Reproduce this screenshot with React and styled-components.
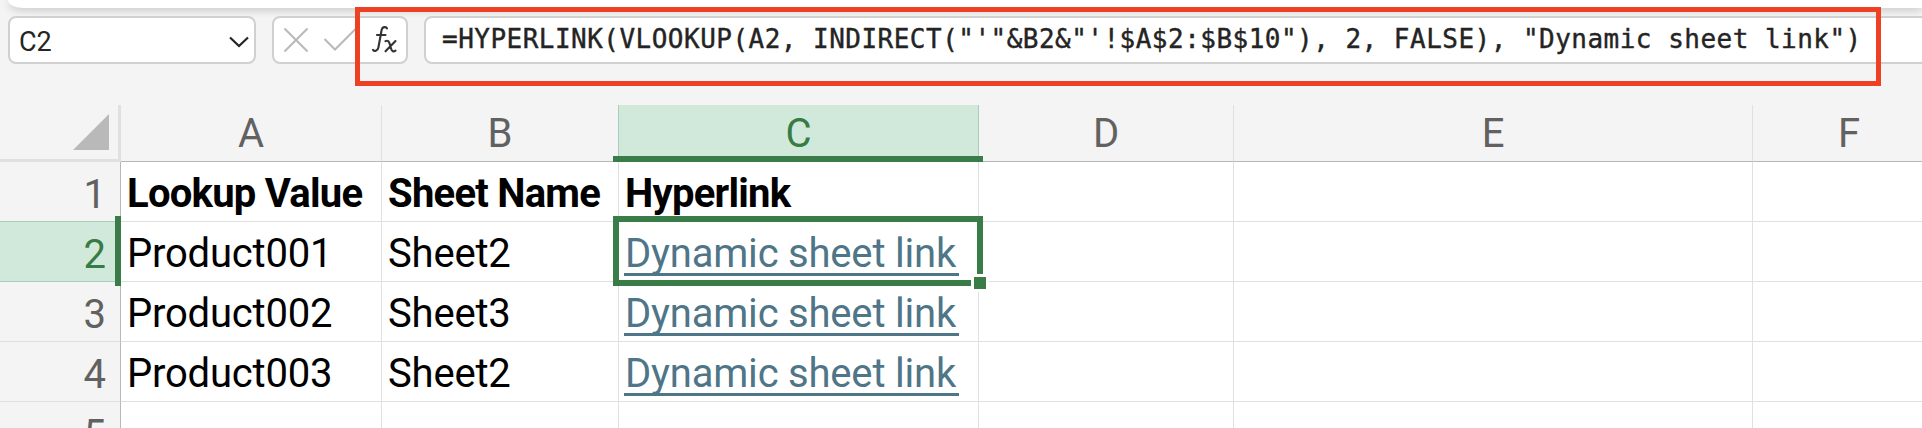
import React from 'react';
import styled, { createGlobalStyle } from "styled-components";

const GlobalStyle = createGlobalStyle`
    body {
        margin: 0;
        overflow: hidden;
        background-color: #f4f4f4;
        font-family: Roboto, "Liberation Sans", sans-serif;
    }

    * {
        box-sizing: border-box;
    }
`

const StyledApp = styled.div`
    position: relative;
    display: flex;
    flex-direction: column;
    width: 1922px;
    height: 428px;
    overflow: hidden;
`

const Ribbon = styled.div`
    flex: none;
    height: 8px;
    margin-left: 8px;
    background-color: #fff;
    border-bottom-left-radius: 16px 8px;
    box-shadow: 0 2px 9px rgba(0, 0, 0, 0.2);
`

const FormulaBar = styled.div`
    display: flex;
    flex: none;
    gap: 16px;
    height: 97px;
    padding: 8px 0 0 8px;
`

const BarBox = styled.div`
    display: flex;
    flex: none;
    align-items: center;
    width: ${props => props.$width}px;
    height: 48px;
    border: 2px solid #d0d0d0;
    border-radius: 8px;
    background-color: #fff;
    color: #242424;
`

const NameBox = styled(BarBox)`
    justify-content: space-between;
    padding: 3px 5px 0 9px;
    font-size: 27px;
`

const FormulaInput = styled(BarBox)`
    padding: 0 0 3px 16px;
    font-family: "DejaVu Sans Mono", monospace;
    font-size: 26px;
    letter-spacing: 0.48px;
    white-space: pre;
    -webkit-text-stroke: 0.4px #242424;
`

const Highlight = styled.div`
    position: absolute;
    left: 355px;
    top: 7px;
    width: 1526px;
    height: 79px;
    border: 5px solid #ed4024;
`

const Grid = styled.div`
    position: relative;
    display: grid;
    grid-template-columns: 121px 261px 237px 360px 255px 519px 193px;
    grid-template-rows: 57px;
    grid-auto-rows: 60px;
    background-color: #fff;
`

const Corner = styled.div`
    display: flex;
    justify-content: flex-end;
    padding: 9px 9px 0 0;
    border-right: 3px solid #e0e0e0;
    border-bottom: 3px solid #e0e0e0;
    background-color: #f4f4f4;
`

const Header = styled.div`
    border-style: solid;
    border-width: 0 1px 1px 0;
    background-color: ${props => props.$active ? '#d1e9da' : '#f4f4f4'};
    color: ${props => props.$active ? '#377b45' : '#616161'};
    font-size: 40px;
`

const ColumnHeader = styled(Header)`
    border-color: transparent ${props => props.$edge ? '#a9cdbd' : '#e0e0e0'} #b8b8b8 transparent;
    padding-top: 5px;
    line-height: 47px;
    text-align: center;
`

const RowHeader = styled(Header)`
    border-color: transparent #b8b8b8 ${props => props.$edge ? '#a9cdbd' : '#e0e0e0'} transparent;
    padding: 9px 14px 0 0;
    line-height: 47px;
    text-align: right;
`

const Cell = styled.div`
    border-right: 1px solid #e0e0e0;
    border-bottom: 1px solid #e0e0e0;
    padding: 8px 0 0 6px;
    color: #000;
    font-size: 40px;
    font-weight: ${props => props.$bold ? 700 : 400};
    letter-spacing: ${props => props.$bold ? '-0.75px' : '-0.2px'};
    line-height: 47px;
    white-space: nowrap;
`

const Link = styled.span`
    display: inline-block;
    height: 46px;
    padding: 0 3px 0 1px;
    margin-left: -1px;
    border-bottom: 3px solid #4f7588;
    color: #4f7588;
`

const Marker = styled.div`
    position: absolute;
    left: ${props => props.$left}px;
    top: ${props => props.$top}px;
    width: ${props => props.$width}px;
    height: ${props => props.$height}px;
    background-color: #397c47;
`

const Selection = styled.div`
    position: absolute;
    left: 613px;
    top: 111px;
    width: 370px;
    height: 70px;
    border: 6px solid #397c47;
`

const FillHandle = styled.div`
    position: absolute;
    left: 971px;
    top: 169px;
    width: 18px;
    height: 18px;
    border: 3px solid #fff;
    background-color: #397c47;
`

const columns = ['A', 'B', 'C', 'D', 'E', 'F'];

const rows = [
    ['Lookup Value', 'Sheet Name', 'Hyperlink'],
    ['Product001', 'Sheet2', 'Dynamic sheet link'],
    ['Product002', 'Sheet3', 'Dynamic sheet link'],
    ['Product003', 'Sheet2', 'Dynamic sheet link'],
    [],
];

const formula = `=HYPERLINK(VLOOKUP(A2, INDIRECT("'"&B2&"'!$A$2:$B$10"), 2, FALSE), "Dynamic sheet link")`;

const Chevron = () => (
    <svg width="20" height="12" viewBox="0 0 20 12" fill="none" stroke="#242424" strokeWidth="2.2">
        <path d="M1 1.5L10 10L19 1.5" />
    </svg>
)

const BarIcons = () => (
    <svg width="132" height="44" viewBox="274 18 132 44" fill="none" stroke="#b8b8b8" strokeWidth="2">
        <path d="M284.5 28.5L307.5 51.5M307.5 28.5L284.5 51.5" />
        <path d="M324.5 39L335 49.5L356.5 28" />
        <g stroke="#333" strokeWidth="2.1" strokeLinecap="round" strokeLinejoin="round">
            <path d="M387 28.5C386.5 26.6 382.5 26.2 381.6 30L378.4 47.5C377.7 51.2 374.3 51.6 373 49.8M377 35H385.5" />
            <path d="M385.5 41.2C387.7 40 389 41.4 389.6 43.5L391.2 49C391.9 51.3 393.5 52 395.5 50.6M395.5 41L385.5 51.3" />
        </g>
    </svg>
)

const App = () => {
    return (
        <StyledApp>
            <GlobalStyle />
            <Ribbon />
            <FormulaBar>
                <NameBox $width={248}>C2<Chevron /></NameBox>
                <BarBox $width={136}><BarIcons /></BarBox>
                <FormulaInput $width={1520}>{formula}</FormulaInput>
            </FormulaBar>
            <Grid>
                <Corner>
                    <svg width="36" height="36"><path d="M36 0V36H0Z" fill="#b9b9b9" /></svg>
                </Corner>
                {columns.map((name) => (
                    <ColumnHeader key={name} $active={name === 'C'} $edge={name === 'B' || name === 'C'}>{name}</ColumnHeader>
                ))}
                {rows.map((row, index) => (
                    <React.Fragment key={index}>
                        <RowHeader $active={index === 1} $edge={index < 2}>{index + 1}</RowHeader>
                        {columns.map((name, col) => (
                            <Cell key={name} $bold={index === 0}>
                                {col === 2 && index > 0 && row[col] ? <Link>{row[col]}</Link> : row[col]}
                            </Cell>
                        ))}
                    </React.Fragment>
                ))}
                <Marker $left={613} $top={51} $width={370} $height={6} />
                <Marker $left={115} $top={111} $width={6} $height={70} />
                <Selection />
                <FillHandle />
            </Grid>
            <Highlight />
        </StyledApp>
    )
}

export default App;
